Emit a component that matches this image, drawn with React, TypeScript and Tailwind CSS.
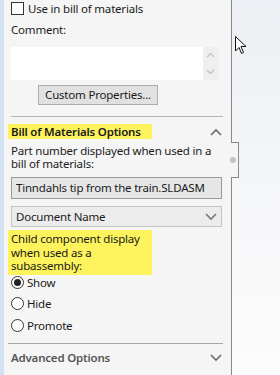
import React from 'react'

const ChevronUp = () => (
  <svg width="12" height="8" viewBox="0 0 12 8" fill="none">
    <path d="M1 7 L6 2 L11 7" stroke="#6b6b6b" strokeWidth="1.6" />
  </svg>
)

const ChevronDown = ({ color = '#6b6b6b' }: { color?: string }) => (
  <svg width="12" height="8" viewBox="0 0 12 8" fill="none">
    <path d="M1 1 L6 6 L11 1" stroke={color} strokeWidth="1.6" />
  </svg>
)

function Radio({ label, checked }: { label: string; checked?: boolean }) {
  return (
    <div className="flex items-center h-[21.5px]">
      <span className="w-[13px] h-[13px] rounded-full border border-[#333] bg-white flex items-center justify-center">
        {checked && <span className="w-[7px] h-[7px] rounded-full bg-[#222]" />}
      </span>
      <span className="ml-[3px]">{label}</span>
    </div>
  )
}

export default function App() {
  return (
    <div
      className="w-[280px] h-[375px] flex overflow-hidden text-[11.5px] tracking-[-0.2px] leading-[13.5px] text-[#1a1a1a] relative whitespace-nowrap"
      style={{ fontFamily: '"Noto Sans", "Open Sans", sans-serif' }}
    >
      {/* blue gutter */}
      <div className="w-[4px] bg-[#d3e3f3]" />

      {/* property manager panel */}
      <div className="w-[228px] bg-[#f5f5f5] border-r border-[#8a8a8a] relative pl-[7px] pr-[9px]">
        <div className="flex items-center mt-[2px] h-[13px]">
          <span className="w-[13px] h-[13px] border border-[#333] bg-white" />
          <span className="ml-[4px]">Use in bill of materials</span>
        </div>

        <div className="mt-[8px] h-[14px] flex items-center">Comment:</div>

        <div className="mt-[10px] flex h-[33px] w-[207px]">
          <div className="flex-1 bg-white" />
          <div className="w-[15px] bg-[#efefef] flex flex-col items-center justify-between py-[5px]">
            <svg width="9" height="6" viewBox="0 0 9 6" fill="none">
              <path d="M1 5 L4.5 1.5 L8 5" stroke="#c4c4c4" strokeWidth="1.4" />
            </svg>
            <svg width="9" height="6" viewBox="0 0 9 6" fill="none">
              <path d="M1 1 L4.5 4.5 L8 1" stroke="#c4c4c4" strokeWidth="1.4" />
            </svg>
          </div>
        </div>

        <div className="mt-[5px] ml-[27px] w-[120px] h-[20px] bg-[#e1e1e1] border border-[#adadad] flex items-center justify-center">
          Custom Properties...
        </div>

        <div className="mt-[11px] h-px w-[212px] bg-[#b5b5b5]" />

        {/* Bill of Materials Options */}
        <div className="mt-[7px] flex items-center justify-between w-[212px] h-[15px]">
          <span className="-ml-[3px] pl-[3px] w-[144px] h-[15px] bg-[#fdf35c] font-semibold flex items-center">
            Bill of Materials Options
          </span>
          <span className="mr-[1px]">
            <ChevronUp />
          </span>
        </div>

        <div className="mt-[5px]">
          <div className="h-[13px] leading-[13px]">Part number displayed when used in a</div>
          <div className="h-[13px] leading-[13px]">bill of materials:</div>
        </div>

        <div className="mt-[7px] w-[211px] h-[22px] bg-[#e6e6e6] border border-[#9a9a9a] flex items-center pl-[4px]">
          Tinndahls tip from the train.SLDASM
        </div>

        <div className="mt-[7px] w-[211px] h-[21px] bg-[#ececec] border border-[#c4c4c4] flex items-center justify-between pl-[4px] pr-[4px]">
          <span>Document Name</span>
          <ChevronDown color="#777" />
        </div>

        <div className="mt-[3px] -ml-[3px] pl-[3px] w-[144px] bg-[#fdf35c] leading-[13.5px] pt-[2px] pb-[2px]">
          <div>Child component display</div>
          <div>when used as a</div>
          <div>subassembly:</div>
        </div>

        <div className="-mt-[3px]">
          <Radio label="Show" checked />
          <Radio label="Hide" />
          <Radio label="Promote" />
        </div>

        <div className="mt-[7px] -ml-[3px] h-px w-[215px] bg-[#a8a8a8]" />

        <div className="mt-[7px] flex items-center justify-between w-[212px] h-[14px]">
          <span className="font-semibold text-[#555]">Advanced Options</span>
          <span className="mr-[1px]">
            <ChevronDown />
          </span>
        </div>

        {/* collapse tab on the right edge */}
        <div className="absolute right-[-8px] top-[142px] w-[8px] h-[36px] bg-[#f5f5f5] border border-l-0 border-[#8a8a8a]" />
        <div className="absolute right-[-5px] top-[157px] w-[6px] h-[6px] rounded-full bg-[#c3c3c3]" />
      </div>

      {/* graphics area */}
      <div className="flex-1 bg-gradient-to-b from-[#eceff3] via-[#f5f6f8] to-[#fcfcfc]" />

      {/* mouse cursor */}
      <svg className="absolute left-[235px] top-[36px]" width="12" height="19" viewBox="0 0 12 19">
        <path d="M0.5 0.5 L0.5 15 L4 11.5 L6.5 17.5 L8.5 16.5 L6 10.5 L11 10.5 Z" fill="#fff" stroke="#111" strokeWidth="1" />
      </svg>
    </div>
  )
}
